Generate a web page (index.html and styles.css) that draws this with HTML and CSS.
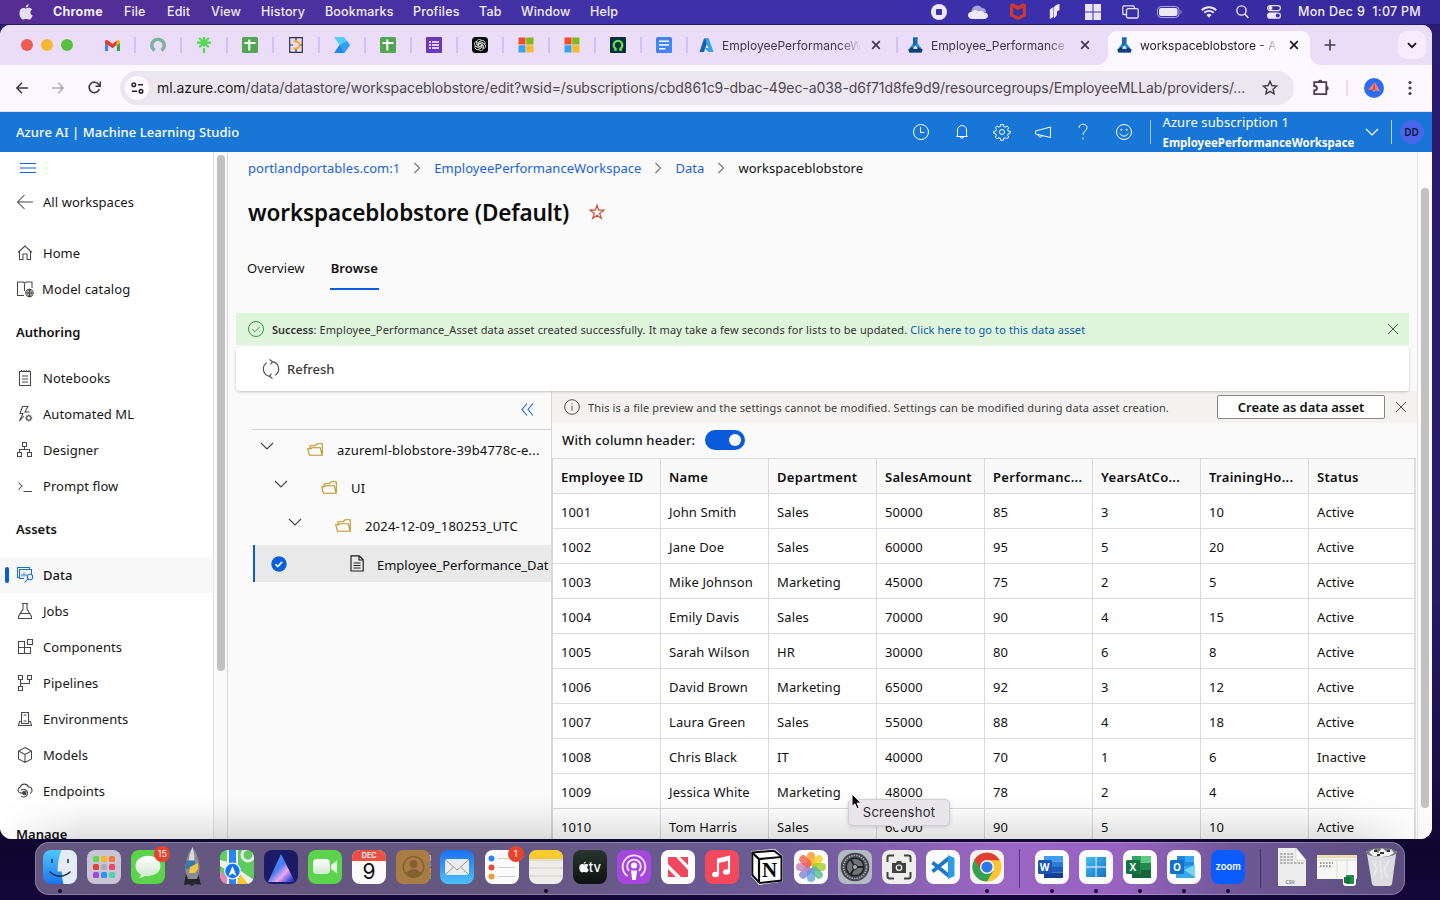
FILE: index.html
```html
<!DOCTYPE html>
<html lang="en">
<head>
<meta charset="utf-8">
<title>workspaceblobstore - Azure AI | Machine Learning Studio</title>
<link rel="stylesheet" href="styles.css">
</head>
<body>
<svg class="defs" width="0" height="0">
  <defs>
    <linearGradient id="gBlue" x1="0" y1="0" x2="0" y2="1"><stop offset="0" stop-color="#1b6ff0"/><stop offset="1" stop-color="#4cc3fb"/></linearGradient>
    <linearGradient id="gAz" x1="0" y1="0" x2="1" y2="1"><stop offset="0" stop-color="#41c0f0"/><stop offset="1" stop-color="#1670c8"/></linearGradient>
    <linearGradient id="gFind" x1="0" y1="0" x2="0" y2="1"><stop offset="0" stop-color="#4fc8fb"/><stop offset="1" stop-color="#1c74f0"/></linearGradient>
    <linearGradient id="gWhite" x1="0" y1="0" x2="0" y2="1"><stop offset="0" stop-color="#fff"/><stop offset="1" stop-color="#d2e8cf"/></linearGradient>
    <linearGradient id="gPrism" x1="0" y1="0" x2="1" y2="1"><stop offset="0" stop-color="#2aa0ff"/><stop offset=".45" stop-color="#4a7cf5"/><stop offset=".65" stop-color="#f0a8e8"/><stop offset=".85" stop-color="#4855e8"/><stop offset="1" stop-color="#221a80"/></linearGradient>
    <clipPath id="tile"><rect width="34" height="34" rx="8"/></clipPath>
  </defs>
  <symbol id="sheet" viewBox="0 0 16 16"><rect width="16" height="16" rx="1.5" fill="#50a651"/><path d="M7.3 2.5v11M2.5 6h11" stroke="#fff" stroke-width="2" fill="none"/></symbol>
  <symbol id="ms" viewBox="0 0 16 16"><path fill="#ef4f2c" d="M.5.5H7.500V7.500H.5z"/><path fill="#80b916" d="M8.200.5h7.300V7.500H8.200z"/><path fill="#39a5ef" d="M.5 8.200H7.500v7.300H.5z"/><path fill="#fbb82c" d="M8.200 8.200h7.300v7.300H8.200z"/></symbol>
  <symbol id="flask" viewBox="0 0 16 16"><path fill="#2a8fd0" d="M5.300 0h5v6.500L15.500 13l-1 3h-13L.4 13l4.900-6.500z"/><path fill="#123e78" d="M.4 13 4 10.500l5 2 2-2 4.500 2.500-1 3h-13z"/><path fill="#fff" d="M8 8.500 10.500 12H5.200z"/><path fill="#1b66a8" d="M5.300 0h5v1.500h-1V7L6.800 9 5.300 6.500z"/></symbol>
  <symbol id="x" viewBox="0 0 10 10"><path d="M1.200 1.200l7.600 7.600M8.800 1.200L1.200 8.800" stroke="currentColor" stroke-width="1.700" fill="none"/></symbol>
  <symbol id="thinx" viewBox="0 0 12 12"><path d="M1 1l10 10M11 1L1 11" stroke="#555" stroke-width="1" fill="none"/></symbol>
  <symbol id="sep" viewBox="0 0 8 12"><path d="M1.500 1l5 5-5 5" stroke="#7a7876" stroke-width="1.200" fill="none"/></symbol>
  <symbol id="chev" viewBox="0 0 14 8"><path d="M1 1l6 6 6-6" stroke="currentColor" stroke-width="1.100" fill="none"/></symbol>
  <symbol id="folder" viewBox="0 0 16 13"><path d="M2.500 12.300 .7 5.700h3l1.300-1H13.200l2 7.600H2.500M3 5.500V2.700h5.200L10 .8h5.300v11.400" fill="none" stroke="#bf9420" stroke-width="1.100"/></symbol>
  <symbol id="apple" viewBox="0 0 14 16"><path fill="currentColor" d="M9.700.2c.1 1.700-1.400 3.300-3 3.200C6.500 1.800 8.100.3 9.700.2zM7 4.400c.8 0 1.600-.7 2.900-.7 1.300 0 2.500.7 3.200 1.700-2.600 1.500-2.200 4.900.6 6-.6 1.700-2 4.200-3.500 4.200-1.200 0-1.500-.7-3-.7s-1.900.7-3 .7C2.300 15.600.4 12 .4 9c0-3.300 2-5.100 4-5.100 1.200 0 2 .5 2.600.5z"/></symbol>
</svg>

<header class="menubar">
  <svg class="apple" width="14" height="16"><use href="#apple"/></svg>
  <b class="m-app">Chrome</b>
  <span style="width:43px">File</span><span style="width:44px">Edit</span><span style="width:50px">View</span><span style="width:64px">History</span><span style="width:88px">Bookmarks</span><span style="width:66px">Profiles</span><span style="width:42px">Tab</span><span style="width:69px">Window</span><span>Help</span>
  <div class="m-right">
    <svg width="16" height="16"><circle cx="8" cy="8" r="8" fill="#eee9f8"/><rect x="5" y="5" width="6" height="6" rx="1" fill="#3b31a6"/></svg>
    <svg width="20" height="14" viewBox="0 0 20 14"><path d="M4.500 9A4.600 4.600 0 0 1 5 2.500 5.500 5.500 0 0 1 14 3c3 0 4 2 4 4z" fill="#a79fd8"/><path d="M0 10c0-2 2-3.500 4-3.300C6 4 9 5 10.500 6.500c3-2 5 0 5.500 1 2.500 0 4 1.500 4 3.200S18.500 14 16 14H4c-2 0-4-1.500-4-4z" fill="#eee9f8"/></svg>
    <svg width="16" height="17" viewBox="0 0 16 17"><path d="M0 1.500 3 0l5 3 5-3 3 1.500V13l-8 4-8-4zM3.200 4.500v6.700L8 13.600l4.800-2.400V4.500L8 7.300z" fill="#c93a32" fill-rule="evenodd"/></svg>
    <svg width="11" height="16" viewBox="0 0 11 16"><path d="M.8 5.500 4.500 3v10L.8 15zM5 3.500Q5.500 1 10.500 0v6L8 7.500V11l-2.500 3H5z" fill="#eee9f8"/></svg>
    <svg width="16" height="16" viewBox="0 0 16 16"><path d="M0 0h7.500v7.500H0zM8.500 0H16v7.500H8.500zM0 8.500h7.500V16H0zM8.500 8.500H16V16H8.500z" fill="#e9e5f6"/></svg>
    <svg width="17" height="14" viewBox="0 0 17 14"><path d="M4 9.500H2A1.300 1.300 0 0 1 .8 8.200V2A1.300 1.300 0 0 1 2 .8h9A1.300 1.300 0 0 1 12.300 2v1.500" stroke="#e9e5f6" stroke-width="1.300" fill="none"/><rect x="4.500" y="3.700" width="11.700" height="9.300" rx="1.600" stroke="#e9e5f6" stroke-width="1.300" fill="none"/></svg>
    <svg width="25" height="12" viewBox="0 0 25 12"><rect x=".5" y=".5" width="21.500" height="11" rx="3.500" stroke="#a9a2dc" fill="none"/><rect x="2" y="2" width="18.500" height="8" rx="2" fill="#eee9f8"/><path d="M23.500 4c1.500.7 1.500 3.300 0 4z" fill="#a9a2dc"/></svg>
    <svg width="16" height="12" viewBox="0 0 16 12"><path d="M.8 4.200a10.300 10.300 0 0 1 14.400 0M3.300 6.800a6.800 6.800 0 0 1 9.400 0" stroke="#eee9f8" stroke-width="1.900" fill="none"/><path d="M5.500 9a3.600 3.600 0 0 1 5 0L8 11.700z" fill="#eee9f8"/></svg>
    <svg width="13" height="14" viewBox="0 0 13 14"><circle cx="5.500" cy="5.500" r="4.600" stroke="#eee9f8" stroke-width="1.400" fill="none"/><path d="M8.900 9l3.500 4" stroke="#eee9f8" stroke-width="1.600"/></svg>
    <svg width="14" height="14" viewBox="0 0 14 14"><rect x=".6" y=".6" width="12.800" height="5" rx="2.500" stroke="#eee9f8" stroke-width="1.200" fill="none"/><circle cx="3.500" cy="3.100" r="2" fill="#eee9f8"/><rect y="7.500" width="14" height="6.300" rx="3.100" fill="#eee9f8"/><circle cx="10.800" cy="10.600" r="2" fill="#3b31a6"/></svg>
    <span class="clock">Mon Dec 9&nbsp; 1:07 PM</span>
  </div>
</header>

<main class="window">
  <div class="tabstrip">
    <div class="lights"><i class="red"></i><i class="yel"></i><i class="grn"></i></div>
    <div class="pin"><svg width="15" height="11" viewBox="0 0 15 11"><path d="M0 1.500V11h3.200V5z" fill="#4285f4"/><path d="M15 1.500V11h-3.200V5z" fill="#34a853"/><path d="M0 1.500C.5-.2 2-.3 3.200.5L7.500 4 11.800.500v4.300L7.500 8.300 0 3z" fill="#e43d30"/><path d="M11.800.5C13-.3 15 0 15 2v1l-3.200 2.400z" fill="#fbbc04"/></svg></div>
    <div class="pin"><svg width="16" height="16" viewBox="0 0 16 16"><path d="M4.500 13.500A6.200 6.200 0 1 1 11.500 13.500" stroke="#7bb39d" stroke-width="3.600" fill="none"/></svg></div>
    <div class="pin"><svg width="14" height="16" viewBox="0 0 14 16"><path d="M7 0v9.500M0 5.600h14M2.200 1l9.600 9.200M11.800 1 2.200 10.200M7 11v5" stroke="#50dc50" stroke-width="2.200" fill="none"/></svg></div>
    <div class="pin"><svg width="16" height="16"><use href="#sheet"/></svg></div>
    <div class="pin"><svg width="14" height="16" viewBox="0 0 14 16"><path d="M.7.7h12.600v14.600H.7zM7 .7v3M7 12v3.300M.7 8H4m6 0h3.300" stroke="#2d3146" stroke-width="1.200" fill="none"/><path d="M4.500 4.500H7a3.500 3.500 0 0 1 0 7H4.500" stroke="#f3ac25" stroke-width="2" fill="none"/></svg></div>
    <div class="pin"><svg width="16" height="16" viewBox="0 0 16 16"><path d="M0 0h10l6 8H5.500z" fill="#4fd0f5"/><path d="M5.500 8H16l-6 8H0z" fill="#1e86f5"/><path d="M5.500 8 13 4l3 4-6 8z" fill="#2fa0f8"/></svg></div>
    <div class="pin"><svg width="16" height="16"><use href="#sheet"/></svg></div>
    <div class="pin"><svg width="16" height="16" viewBox="0 0 16 16"><rect width="16" height="16" rx="1" fill="#6a38b8"/><path d="M3 5h2M3 8h2M3 11h2M6 5h7M6 8h7M6 11h7" stroke="#fff" stroke-width="1.700"/></svg></div>
    <div class="pin"><svg width="16" height="16" viewBox="0 0 16 16"><rect width="16" height="16" rx="3.500" fill="#050505"/><g fill="none" stroke="#ddd" stroke-width=".8"><path id="lobe" d="M8 9.800 4.900 8V4.700A2.600 2.600 0 0 1 9.600 3.300L7 4.900v3"/><use href="#lobe" transform="rotate(60 8 8)"/><use href="#lobe" transform="rotate(120 8 8)"/><use href="#lobe" transform="rotate(180 8 8)"/><use href="#lobe" transform="rotate(240 8 8)"/><use href="#lobe" transform="rotate(300 8 8)"/></g></svg></div>
    <div class="pin"><svg width="16" height="16"><use href="#ms"/></svg></div>
    <div class="pin"><svg width="16" height="16"><use href="#ms"/></svg></div>
    <div class="pin"><svg width="16" height="16" viewBox="0 0 16 16"><rect width="16" height="16" rx="1" fill="#0b2e3c"/><path d="M6 11.900A4.300 4.300 0 1 1 10 11.900M4 12.500h2.800M9.200 12.500H12" stroke="#5fe04e" stroke-width="2.300" fill="none"/></svg></div>
    <div class="pin"><svg width="16" height="16" viewBox="0 0 16 16"><rect width="16" height="16" rx="1.500" fill="#4285f4"/><path d="M3 4.300h10M3 8h10M3 11.700h6.500" stroke="#fff" stroke-width="1.600"/></svg></div>
    <div class="tab t1"><svg width="15" height="15" viewBox="0 0 15 15"><path d="M5 .5h4.500L5 14H.5z" fill="#1561b0"/><path d="M6.500.5h3.200L14.500 14h-4.800L5.500 10h4L7.200 5z" fill="#33a4ea"/></svg><span>EmployeePerformanceW</span><svg class="cx" width="10" height="10"><use href="#x"/></svg></div>
    <div class="tab t2"><svg width="15" height="16"><use href="#flask"/></svg><span>Employee_Performance -</span><svg class="cx" width="10" height="10"><use href="#x"/></svg></div>
    <div class="tab active"><svg width="15" height="16"><use href="#flask"/></svg><span>workspaceblobstore - Az</span><svg class="cx" width="10" height="10"><use href="#x"/></svg></div>
    <svg class="plus" width="12" height="12"><path d="M6 .5v11M.5 6h11" stroke="#453c54" stroke-width="1.600"/></svg>
    <div class="tabmenu"><svg width="10" height="7"><path d="M1 1.200l4 4 4-4" stroke="#1c1a20" stroke-width="1.900" fill="none"/></svg></div>
  </div>

  <div class="toolbar">
    <svg width="12" height="12" viewBox="0 0 12 12"><path d="M12 6H1M6 .8.9 6 6 11.200" stroke="#3d374a" stroke-width="1.500" fill="none"/></svg>
    <svg width="12" height="12" viewBox="0 0 12 12"><path d="M0 6h11M6 .8 11.100 6 6 11.200" stroke="#b0a9b6" stroke-width="1.500" fill="none"/></svg>
    <svg width="13" height="13" viewBox="0 0 13 13"><path d="M11.300 8A5.200 5.200 0 1 1 10.700 3.500L12 5" stroke="#3d374a" stroke-width="1.600" fill="none"/><path d="M12.300.5v4.800H7.500" stroke="#3d374a" stroke-width="1.600" fill="none"/></svg>
    <div class="omni">
      <div class="tune"><svg width="13" height="12" viewBox="0 0 13 12"><g stroke="#25222b" stroke-width="1.500" fill="none"><circle cx="2.800" cy="2.800" r="1.800"/><path d="M7 2.800h5M1 9.200h5"/><circle cx="10" cy="9.200" r="1.800"/></g></svg></div>
      <p class="url"><em>ml.azure.com</em>/data/datastore/workspaceblobstore/edit?wsid=/subscriptions/cbd861c9-dbac-49ec-a038-d6f71d8fe9d9/resourcegroups/EmployeeMLLab/providers/...</p>
      <svg width="16" height="15" viewBox="0 0 16 15"><path d="M8 1.300l1.900 4.300 4.700.5-3.500 3.100 1 4.600L8 11.400l-4.100 2.400 1-4.600L1.400 6.100l4.700-.5z" stroke="#443f4c" stroke-width="1.500" fill="none"/></svg>
    </div>
    <svg class="ext" width="17" height="17" viewBox="0 0 17 17"><path d="M1.200 3.200H13.300V15.200H1.200V11.500C4.800 11.500 4.800 7 1.200 7z" fill="none" stroke="#453c54" stroke-width="1.800"/><path d="M5 3a2.200 2.200 0 0 1 4.400 0zM13.500 7a2.200 2.200 0 0 1 0 4.400z" fill="#453c54"/></svg>
    <i class="tsep"></i>
    <svg class="prof" width="20" height="20"><circle cx="10" cy="10" r="10" fill="#2c6cf0"/><path d="M11 4l5 9.500-4.500-1L9.500 14l-1-2-4.500-.5z" fill="#f2806e"/><path d="M11 4v8L8 12z" fill="#c74e58"/></svg>
    <svg width="4" height="16"><g fill="#453c54"><circle cx="2" cy="2.500" r="1.600"/><circle cx="2" cy="8" r="1.600"/><circle cx="2" cy="13.500" r="1.600"/></g></svg>
  </div>

  <div class="azbar">
    <span class="brand">Azure AI | Machine Learning Studio</span>
    <div class="azicons">
      <svg width="18" height="18"><circle cx="9" cy="9" r="7.500"/><path d="M8.500 4v5.500h4"/></svg>
      <svg width="18" height="18"><path d="M3.500 13.500h11M4.500 13.500V7a4.500 4.500 0 0 1 9 0v6.500M7.300 13.500a1.700 1.700 0 0 0 3.400 0"/></svg>
      <svg width="18" height="18"><circle cx="9" cy="9" r="2.500"/><path d="M7.700 1.500h2.600l.4 2 1.500.6 1.700-1.100 1.800 1.800-1.100 1.700.6 1.500 2 .4v1.800l-2 .6-.6 1.500 1.100 1.700-1.800 1.800-1.700-1.100-1.500.6-.4 2H7.700l-.4-2-1.500-.6-1.700 1.100L2.300 14l1.100-1.700-.6-1.500-2-.6V8.400l2-.4.600-1.500-1.100-1.700L4.100 3l1.700 1.100 1.500-.6z"/></svg>
      <svg width="18" height="18"><path d="M1.500 8 16.500 4v10.500L1.500 11zM4 11.500c0 3 4 3.300 4.500 1"/></svg>
      <svg width="18" height="18"><path d="M5 5c0-5 8-5 8-.3 0 3-4 3.300-4 7.300M9 14.500V16.500"/></svg>
      <svg width="18" height="18"><circle cx="9" cy="9" r="7.500"/><path d="M5 10.500c1.500 3.500 6.500 3.500 8 0"/><circle cx="6.300" cy="6.800" r=".6"/><circle cx="11.700" cy="6.800" r=".6"/></svg>
    </div>
    <div class="sub"><span>Azure subscription 1</span><b>EmployeePerformanceWorkspace</b></div>
    <svg class="azchev" width="14" height="8"><use href="#chev"/></svg>
    <div class="avwrap"><div class="avatar">DD</div></div>
  </div>

  <div class="body">
    <nav class="side">
      <div class="burger"><svg width="16" height="10"><path d="M0 .5h16M0 5h16M0 9.500h16" stroke="#0a60e0"/></svg></div>
      <div class="item"><svg viewBox="0 0 18 18"><path d="M17 9H1.500M8.500 2 1.500 9l7 7"/></svg>All workspaces</div>
      <div class="gap15"></div>
      <div class="item"><svg viewBox="0 0 18 18"><path d="M2 8.500 9 2l7 6.500M3.500 7.500V15.500H7V10h4v5.500h3.500v-8"/></svg>Home</div>
      <div class="item cat"><svg viewBox="0 0 18 18"><path d="M8 15.500H1.500V2H7l1.500 1L10 2h6v6M8.500 3v8"/><circle cx="13.500" cy="13" r="3.700"/><path d="M9.500 13h8M13.500 9v8"/><ellipse cx="13.500" cy="13" rx="1.700" ry="3.700"/></svg>Model catalog</div>
      <h4>Authoring</h4>
      <div class="item"><svg viewBox="0 0 18 18"><path d="M3.500 2.500h11v14h-11zM5.500 1v2M8 1v2M10.500 1v2M13 1v2M6 7h6M6 10h6M6 13h6"/></svg>Notebooks</div>
      <div class="item"><svg viewBox="0 0 18 18"><path d="M6.500 1.500h5.500L9 7h4.500M6.500 1.500 4 8.500h3L3.500 16 8 11"/><circle cx="12.800" cy="13" r="2.200"/><path d="M12.800 9.500v1.300M12.800 15.200v1.300M9.300 13h1.300M15 13h1.300M10.400 10.600l.9.900M14.300 14.500l.9.900M15.200 10.600l-.9.900M11.300 14.500l-.9.900"/></svg>Automated ML</div>
      <div class="item"><svg viewBox="0 0 18 18"><path d="M6.500 1.500h4v4h-4zM1.500 11.500h4v4h-4zM11.500 11.500h4v4h-4zM8.500 5.500v3M3.500 11.500v-3h10v3"/></svg>Designer</div>
      <div class="item"><svg viewBox="0 0 18 18"><path d="M2.500 5.500 6 9l-3.500 3.500M7.500 14.500h8.500"/></svg>Prompt flow</div>
      <h4>Assets</h4>
      <div class="item on"><svg viewBox="0 0 18 18"><path d="M3.500 11.500h-2V1.500h12v2M8 12.500H3.500v-9h12V8M6 10.500V8M8 10.500V6.500M10 10V8"/><circle cx="14" cy="11" r="2.700"/><path d="M12 13l-3.500 3.500"/></svg>Data</div>
      <div class="item"><svg viewBox="0 0 18 18"><path d="M6 1.500h6M7 1.500V7L2.500 14.500v2h13v-2L11 7V1.500M4.500 11.500h9"/></svg>Jobs</div>
      <div class="item"><svg viewBox="0 0 18 18"><path d="M2.500 3.500h6v12h-6zM2.500 9.500h12v6h-12M11.500 1.500h5v5h-5z"/></svg>Components</div>
      <div class="item"><svg viewBox="0 0 18 18"><path d="M2.500 1.500h4v4h-4zM11.500 1.500h4v4h-4zM2.500 12.500h4v4h-4zM4.500 5.500v7M4.500 9.500h9v-4"/></svg>Pipelines</div>
      <div class="item"><svg viewBox="0 0 18 18"><path d="M5.500 13.500v-11h7v11zM7.500 5h3M7.500 11h3M5 11.500H3.500l-1 4h13l-1-4H13"/></svg>Environments</div>
      <div class="item"><svg viewBox="0 0 18 18"><path d="M9 1.500 15.500 5v8L9 16.500 2.500 13V5zM2.500 5 9 8.500 15.500 5M9 8.500v8"/></svg>Models</div>
      <div class="item"><svg viewBox="0 0 18 18"><path d="M5.500 11H4.200A3 3 0 0 1 4 5.300 4.500 4.500 0 0 1 12.500 5c3.500-.5 5 5 1.500 6.500"/><circle cx="8.300" cy="11" r="1.700" fill="#444"/><path d="M4.500 11h4M5 8.500c2-2.500 6.500-1 6.500 2.500 0 4-4.500 5-6.500 3"/></svg>Endpoints</div>
      <h4>Manage</h4>
    </nav>
    <div class="sidescroll"><i></i></div>

    <section class="content">
      <div class="crumbs"><a>portlandportables.com:1</a><svg width="8" height="12"><use href="#sep"/></svg><a>EmployeePerformanceWorkspace</a><svg width="8" height="12"><use href="#sep"/></svg><a>Data</a><svg width="8" height="12"><use href="#sep"/></svg><span>workspaceblobstore</span></div>
      <div class="titlerow"><h1>workspaceblobstore (Default)</h1><svg width="16" height="16" viewBox="0 0 16 16"><path d="M8 1.200l1.700 5h5.200l-4.200 3.200 1.600 5L8 11.300l-4.300 3.100 1.600-5L1.100 6.200h5.200z" stroke="#d14b35" stroke-width="1.200" fill="none"/></svg></div>
      <div class="pivots"><span>Overview</span><b>Browse</b></div>
      <div class="success">
        <svg width="18" height="18"><circle cx="9" cy="9" r="7.500" stroke="#2f9a2f" fill="none"/><path d="M5.200 9.200l2.600 2.600 5-5" stroke="#2f9a2f" fill="none"/></svg>
        <p><b>Success</b>: Employee_Performance_Asset data asset created successfully. It may take a few seconds for lists to be updated. <a>Click here to go to this data asset</a></p>
        <svg class="sx" width="12" height="12"><use href="#thinx"/></svg>
      </div>
      <div class="cmdbar"><svg width="18" height="20" viewBox="0 0 18 20"><path d="M7.500 17.300A7.300 7.300 0 0 1 5 3.800M10.500 2.700A7.300 7.300 0 0 1 13 16.200M7.500.5l3 2.200-2 2.800M10.500 19.500l-3-2.200 2-2.800" fill="none" stroke="#555" stroke-width="1.200"/></svg><span>Refresh</span></div>
      <div class="split">
        <div class="tree">
          <div class="collapse"><svg width="13" height="13"><path d="M6 .5l-5 6 5 6M12 .5l-5 6 5 6" stroke="#1a62dd" stroke-width="1.100" fill="none"/></svg></div>
          <div class="node l0"><svg class="nc" width="14" height="8"><use href="#chev"/></svg><svg width="16" height="13"><use href="#folder"/></svg><span>azureml-blobstore-39b4778c-e...</span></div>
          <div class="node l1"><svg class="nc" width="14" height="8"><use href="#chev"/></svg><svg width="16" height="13"><use href="#folder"/></svg><span>UI</span></div>
          <div class="node l2"><svg class="nc" width="14" height="8"><use href="#chev"/></svg><svg width="16" height="13"><use href="#folder"/></svg><span>2024-12-09_180253_UTC</span></div>
          <div class="node sel"><svg width="18" height="18"><circle cx="9" cy="9" r="8.500" fill="#fff"/><circle cx="9" cy="9" r="7.800" fill="#0a5fdc"/><path d="M5.500 9.200l2.300 2.300 4.300-4.600" stroke="#fff" stroke-width="1.600" fill="none"/></svg><svg class="file" width="14" height="17"><path d="M1 .8h8.300l3.900 4v11.200H1zM9 .8V5h4M3.500 8h7M3.500 10.500h7M3.500 13h7" fill="none" stroke="#1d1c1b" stroke-width="1.150"/></svg><span>Employee_Performance_Dat</span></div>
        </div>
        <div class="preview">
          <div class="notice"><svg width="16" height="16"><circle cx="8" cy="8" r="7.300" fill="none" stroke="#55534f"/><path d="M8 6.800v5M8 4v1.300" stroke="#55534f"/></svg><span>This is a file preview and the settings cannot be modified. Settings can be modified during data asset creation.</span><button>Create as data asset</button><svg width="12" height="12"><use href="#thinx"/></svg></div>
          <div class="hdrrow"><b>With column header:</b><i class="toggle"></i></div>
          <table>
            <tr><th>Employee ID</th><th>Name</th><th>Department</th><th>SalesAmount</th><th>Performanc...</th><th>YearsAtCo...</th><th>TrainingHo...</th><th>Status</th></tr>
            <tr><td>1001</td><td>John Smith</td><td>Sales</td><td>50000</td><td>85</td><td>3</td><td>10</td><td>Active</td></tr>
            <tr><td>1002</td><td>Jane Doe</td><td>Sales</td><td>60000</td><td>95</td><td>5</td><td>20</td><td>Active</td></tr>
            <tr><td>1003</td><td>Mike Johnson</td><td>Marketing</td><td>45000</td><td>75</td><td>2</td><td>5</td><td>Active</td></tr>
            <tr><td>1004</td><td>Emily Davis</td><td>Sales</td><td>70000</td><td>90</td><td>4</td><td>15</td><td>Active</td></tr>
            <tr><td>1005</td><td>Sarah Wilson</td><td>HR</td><td>30000</td><td>80</td><td>6</td><td>8</td><td>Active</td></tr>
            <tr><td>1006</td><td>David Brown</td><td>Marketing</td><td>65000</td><td>92</td><td>3</td><td>12</td><td>Active</td></tr>
            <tr><td>1007</td><td>Laura Green</td><td>Sales</td><td>55000</td><td>88</td><td>4</td><td>18</td><td>Active</td></tr>
            <tr><td>1008</td><td>Chris Black</td><td>IT</td><td>40000</td><td>70</td><td>1</td><td>6</td><td>Inactive</td></tr>
            <tr><td>1009</td><td>Jessica White</td><td>Marketing</td><td>48000</td><td>78</td><td>2</td><td>4</td><td>Active</td></tr>
            <tr><td>1010</td><td>Tom Harris</td><td>Sales</td><td>60000</td><td>90</td><td>5</td><td>10</td><td>Active</td></tr>
          </table>
        </div>
      </div>
    </section>
    <div class="mainscroll"><i></i></div>
  </div>
  <div class="shade"></div>
</main>

<footer class="dock">
  <div class="app run"><svg viewBox="0 0 34 34"><rect width="34" height="34" rx="8" fill="url(#gFind)"/><path d="M18.500 0H26a8 8 0 0 1 8 8v18a8 8 0 0 1-8 8h-5.500q-1.700-6-1.700-12.500H14.500Q14.700 9 18.500 0z" fill="#e4ebf4"/><path d="M9 9.500v3M25 9.500v3M7 22q10 8.500 20 0" stroke="#1d2b45" stroke-width="1.500" fill="none" stroke-linecap="round"/></svg></div>
  <div class="app"><svg viewBox="0 0 34 34"><rect width="34" height="34" rx="8" fill="#cac5d6"/><g><rect x="6" y="6" width="6" height="6" rx="1.500" fill="#62d84a"/><rect x="14" y="6" width="6" height="6" rx="1.500" fill="#f7b52f"/><rect x="22" y="6" width="6" height="6" rx="1.500" fill="#f47c30"/><rect x="6" y="14" width="6" height="6" rx="1.500" fill="#e2442f"/><rect x="14" y="14" width="6" height="6" rx="1.500" fill="#a9adb8"/><rect x="22" y="14" width="6" height="6" rx="1.500" fill="#f04766"/><rect x="6" y="22" width="6" height="6" rx="1.500" fill="#a34bd8"/><rect x="14" y="22" width="6" height="6" rx="1.500" fill="#2b95f5"/><rect x="22" y="22" width="6" height="6" rx="1.500" fill="#4fd3a8"/></g></svg></div>
  <div class="app"><svg viewBox="0 0 34 34"><rect width="34" height="34" rx="8" fill="#5bd44b"/><ellipse cx="17" cy="16" rx="12.500" ry="10.200" fill="url(#gWhite)"/><path d="M10 23q0 4-2.500 5 5 0 7-3z" fill="#dcefd9"/></svg><u class="badge">15</u></div>
  <div class="app rocket"><svg viewBox="0 0 34 40"><path d="M11 27 9 38l4-2 1-6zM23 27l3 11-4-2-2-6z" fill="#222328"/><path d="M17.500 0Q9 12 10.500 25l2.500 7h9l2.300-7Q26 12 17.500 0z" fill="#898b90"/><path d="M17.500 0Q14 8 13.500 15h6Q20 8 17.500 0z" fill="#d8dadc"/><path d="M11 13.500h9v5l-7 3.500H10.500z" fill="#3a78aa"/><path d="M15 20l8-4v6l-3 4h-6z" fill="#f3c540"/><path d="M12 32h10l2 6-4-1-3 2-3-2-4 1z" fill="#27272b"/></svg></div>
  <div class="app"><svg viewBox="0 0 34 34"><g clip-path="url(#tile)"><rect width="34" height="34" fill="#5dcc5e"/><path d="M0 20 12 34H0z" fill="#ea7fc1"/><path d="M0 0h9v14H0z" fill="#63cf62"/><path d="M0 10 8 12 34 30v4H28L0 16z" fill="#f2f0ea"/><path d="M7 0h2v34H7zM16 0h2v34h-2z" fill="#f2f0ea"/><path d="M9 0h7v34H9z" fill="#2786f4"/><path d="M20 24l8 10H17z" fill="#f5c52e"/><circle cx="28" cy="5" r="6" fill="none" stroke="#e4e9ec" stroke-width="3"/><circle cx="12.500" cy="21" r="7.800" fill="#1473ee" stroke="#e6f0fb" stroke-width="1.200"/><path d="M12.500 16l4 10-4-2.500L8.500 26z" fill="#fff"/></g></svg></div>
  <div class="app"><svg viewBox="0 0 34 34"><rect width="34" height="34" rx="8" fill="#1c1c66"/><path d="M17 4 31 32H4z" fill="url(#gPrism)"/></svg></div>
  <div class="app"><svg viewBox="0 0 34 34"><rect width="34" height="34" rx="8" fill="#5bd44b"/><rect x="5" y="9" width="17" height="15" rx="4" fill="url(#gWhite)"/><path d="M23 15l6-4.500v13L23 19z" fill="#e6f5e4"/></svg></div>
  <div class="app cal"><span>DEC</span><strong>9</strong></div>
  <div class="app"><svg viewBox="0 0 34 34"><path d="M30 5h5v6h-5z" fill="#aeb5bc"/><path d="M30 12h5v5h-5z" fill="#3aa0e8"/><path d="M30 18h5v5h-5z" fill="#ef8c33"/><path d="M30 24h5v5h-5z" fill="#56bb55"/><rect width="34" height="34" rx="7" fill="#a97b45"/><g fill="none" stroke="#82602f" stroke-width="1.300"><circle cx="17.500" cy="17" r="10.300"/></g><circle cx="17.500" cy="14" r="4" fill="#82602f"/><path d="M10 23q7.500-8 15 0-7 8-15 0z" fill="#82602f"/></svg></div>
  <div class="app"><svg viewBox="0 0 34 34"><rect width="34" height="34" rx="8" fill="url(#gBlue)"/><rect x="5" y="9" width="24" height="16" rx="2.500" fill="#ececec"/><path d="M5.500 10 17 20 28.500 10M5.500 24.500l8-7.500M28.500 24.500l-8-7.500" stroke="#9a9a9a" stroke-width="1" fill="none"/></svg></div>
  <div class="app"><svg viewBox="0 0 34 34"><rect width="34" height="34" rx="8" fill="#fbfbfb"/><circle cx="6.500" cy="8.500" r="3" fill="#2b86f5"/><circle cx="6.500" cy="17.500" r="3" fill="#ea4b3e"/><circle cx="6.500" cy="26.500" r="3" fill="#f29a33"/><path d="M12.500 8.500H30M12.500 17.500H30M12.500 26.500H30" stroke="#cfcfcf"/></svg><u class="badge">1</u></div>
  <div class="app run"><svg viewBox="0 0 34 34"><rect width="34" height="34" rx="8" fill="#efede9"/><path d="M0 9V8a8 8 0 0 1 8-8h18a8 8 0 0 1 8 8v1z" fill="#f9cb2c"/><path d="M0 10h34M0 18h34M0 26h34" stroke="#cfcbc4"/></svg></div>
  <div class="app tv"><svg width="10" height="12" viewBox="0 0 14 16"><use href="#apple"/></svg>tv</div>
  <div class="app"><svg viewBox="0 0 34 34"><rect width="34" height="34" rx="8" fill="#a547dc"/><g fill="none" stroke="#f5e8fc" stroke-width="1.800"><path d="M10.500 26A11.300 11.300 0 1 1 23.500 26"/><path d="M12 21A6.800 6.800 0 1 1 22 21"/></g><circle cx="17" cy="15.500" r="3" fill="#fff"/><path d="M14 20.500h6L18.800 30h-3.600z" fill="#fff"/></svg></div>
  <div class="app"><svg viewBox="0 0 34 34"><rect width="34" height="34" rx="8" fill="#fcfcfc"/><path d="M7 7h8l12 13v7h-7L7 14z" fill="#ef4760"/><path d="M19 7h8v8zM7 19l8 8H7z" fill="#ef4760"/></svg></div>
  <div class="app"><svg viewBox="0 0 34 34"><rect width="34" height="34" rx="8" fill="#f4485c"/><path d="M13 24V9.500l11-2.500v14" fill="none" stroke="#fff" stroke-width="2.200"/><path d="M13 11.500 24 9" stroke="#fff" stroke-width="3"/><ellipse cx="10.500" cy="24.500" rx="3.500" ry="2.800" fill="#fff"/><ellipse cx="21.500" cy="22" rx="3.500" ry="2.800" fill="#fff"/></svg></div>
  <div class="app notion"><svg viewBox="0 0 34 34"><path d="M1 1 25-1l8 7v25.500L9 35l-8-9z" fill="#fff"/><path d="M2.300 2.500 24 .8 31.500 6.500v24L9.500 33 2.300 25z" fill="#fff" stroke="#0b0b0b" stroke-width="2"/><path d="M2.500 3 9 9l22.500-2M9 9v24" stroke="#0b0b0b" stroke-width="2.200" fill="none"/></svg><span>N</span></div>
  <div class="app"><svg viewBox="0 0 34 34"><rect width="34" height="34" rx="8" fill="#fcfcfc"/><g fill-opacity=".82"><rect x="13" y="2" width="8" height="14" rx="4" fill="#f79a26"/><rect x="13" y="2" width="8" height="14" rx="4" fill="#f2cf20" transform="rotate(45 17 17)"/><rect x="13" y="2" width="8" height="14" rx="4" fill="#a5cb3a" transform="rotate(90 17 17)"/><rect x="13" y="2" width="8" height="14" rx="4" fill="#58b98a" transform="rotate(135 17 17)"/><rect x="13" y="2" width="8" height="14" rx="4" fill="#60a8e4" transform="rotate(180 17 17)"/><rect x="13" y="2" width="8" height="14" rx="4" fill="#8485d0" transform="rotate(225 17 17)"/><rect x="13" y="2" width="8" height="14" rx="4" fill="#c383c2" transform="rotate(270 17 17)"/><rect x="13" y="2" width="8" height="14" rx="4" fill="#ee5f50" transform="rotate(315 17 17)"/></g></svg></div>
  <div class="app"><svg viewBox="0 0 34 34"><rect width="34" height="34" rx="8" fill="#b3bbc3"/><circle cx="17" cy="17" r="14.300" fill="#45484e"/><circle cx="17" cy="17" r="11.500" fill="none" stroke="#a9adb2" stroke-width="1.600" stroke-dasharray="1.500 1"/><circle cx="17" cy="17" r="8.800" fill="#70747a" stroke="#222" stroke-width="1.500"/><path d="M17 17h9M17 17l-4.500-8M17 17l-4.500 8" stroke="#222" stroke-width="1.800"/><circle cx="17" cy="17" r="2.500" fill="#a9adb2" stroke="#222"/></svg></div>
  <div class="app"><svg viewBox="0 0 34 34"><rect width="34" height="34" rx="8" fill="#eeeeec"/><path d="M5.500 12V7.500q0-2 2-2H12M22 5.500h4.500q2 0 2 2V12M28.500 22v4.500q0 2-2 2H22M12 28.500H7.500q-2 0-2-2V22" fill="none" stroke="#3f4143" stroke-width="2"/><path d="M10 13h4l1-2h4l1 2h4v10H10z" fill="#3f4143"/><circle cx="17" cy="17.700" r="2.700" fill="#3f4143" stroke="#fff" stroke-width="1.200"/></svg></div>
  <div class="app"><svg viewBox="0 0 34 34"><rect width="34" height="34" rx="8" fill="#fcfcfc"/><path d="M6.500 12.500 23 26M6.500 21.500 23 8" stroke="#1b78c6" stroke-width="3.600"/><path d="M22 5l6.500 3v18L22 29z" fill="#2c9cea"/></svg></div>
  <div class="app run"><svg viewBox="0 0 34 34"><rect width="34" height="34" rx="8" fill="#f5f4f5"/><circle cx="17" cy="17" r="14.500" fill="#fbc531"/><path d="M17 17 4.400 9.700A14.500 14.500 0 0 0 17 31.500l6-10z" fill="#36a251"/><path d="M10 18 4.400 9.700A14.500 14.500 0 0 1 29.600 10.300H17z" fill="#e23d32"/><circle cx="17" cy="17" r="7" fill="#fff"/><circle cx="17" cy="17" r="5.600" fill="#2f78ec"/></svg></div>
  <i class="dsep"></i>
  <div class="app run letter"><svg viewBox="0 0 34 34"><rect width="34" height="34" rx="8" fill="#fcfcfc"/><path d="M9 6h19v5.500H9z" fill="#3f9df0"/><path d="M9 11.500h19V17H9z" fill="#2b7cd8"/><path d="M9 17h19v5.500H9z" fill="#1c5cbe"/><path d="M9 22.500h19V28H9z" fill="#153f92"/><rect x="3" y="10" width="14" height="14" rx="1.500" fill="#1b55b4"/></svg><span>W</span></div>
  <div class="app run"><svg viewBox="0 0 34 34"><rect width="34" height="34" rx="8" fill="#fcfcfc"/><path d="M7 7h9.600v9.600H7zM17.500 7h9.600v9.600h-9.600zM7 17.500h9.600v9.600H7zM17.500 17.500h9.600v9.600h-9.600z" fill="url(#gAz)"/></svg></div>
  <div class="app run letter"><svg viewBox="0 0 34 34"><rect width="34" height="34" rx="8" fill="#fcfcfc"/><path d="M9 6h19v22H9z" fill="#1f8c4c"/><path d="M18 6h10v7H18z" fill="#5fca84"/><path d="M9 6h9v7H9z" fill="#35a464"/><path d="M18 20h10v8H9v-4h9z" fill="#17643a"/><rect x="3" y="10" width="14" height="14" rx="1.500" fill="#147341"/></svg><span>X</span></div>
  <div class="app run letter"><svg viewBox="0 0 34 34"><rect width="34" height="34" rx="8" fill="#fcfcfc"/><path d="M10 6h17v12H10z" fill="#2587dc"/><path d="M18 6h9v6h-9z" fill="#36a8f0"/><path d="M9 17l19-2v12q0 1-1 1H9z" fill="#36a9e6"/><path d="M28 15v12L17 20z" fill="#79d5f4"/><rect x="3" y="10" width="14" height="14" rx="1.500" fill="#1272c8"/></svg><span>O</span></div>
  <div class="app run zoom">zoom</div>
  <i class="dsep"></i>
  <div class="app doc"><svg viewBox="0 0 34 40"><path d="M2 1h18l10 12v26H2z" fill="#ededed"/><path d="M20 1v12h10z" fill="#fff" stroke="#c5c5c5" stroke-width=".6"/><path d="M4 7h14M4 10h14M4 13h14M4 16h24" stroke="#a3a3a3" stroke-width="1.500" stroke-dasharray="2.500 1"/></svg><span>CSV</span></div>
  <div class="app shot"><svg viewBox="0 0 40 32"><rect width="40" height="24" fill="#f7f7f5"/><path d="M0 0h40v3H0z" fill="#ebdfae"/><path d="M0 5h40M0 12h16M20 5v19M30 5v19" stroke="#dadada"/><path d="M3 8h13M3 11h12" stroke="#999" stroke-width="2" stroke-dasharray="1.500 1.500"/><rect x="26" y="18" width="13" height="13" rx="3" fill="#fff"/><path d="M29 20h8v9h-8z" fill="#1f8c4c"/><path d="M27 22h6v6h-6z" fill="#147341"/></svg></div>
  <div class="app trash"><svg viewBox="0 0 34 40"><path d="M1.500 4h30L27 37q-.5 2-3 2H10q-2.500 0-3-2z" fill="#dcdcde"/><ellipse cx="16.500" cy="5.500" rx="15" ry="4.500" fill="#77797c"/><path d="M4 5l5-3 4 4 4-5 5 4 4-3 3 4-5 3-8 1-8-1z" fill="#f2f2f2"/><path d="M9 4h3M15 6h4M22 4h3M12 8h3" stroke="#333" stroke-width="2"/><path d="M8 14l4 8-3 6M24 13l-5 10 4 8M15 14l2 18" stroke="#e9e9ea" stroke-width="2" fill="none"/></svg></div>
</footer>

<div class="tip">Screenshot<i></i></div>
<svg class="cursor" width="12" height="18" viewBox="0 0 12 18"><path d="M1 1v12.500l2.900-2.700 2 4.900 2.200-.9-2-4.700H10z" fill="#000" stroke="#fff" stroke-width="1"/></svg>
</body>
</html>
```
FILE: styles.css
```css
* { box-sizing: border-box; }
body {
  margin: 0;
  width: 1440px;
  height: 900px;
  overflow: hidden;
  display: flex;
  flex-direction: column;
  background: linear-gradient(180deg, #2c1c72 0, #271a66 600px, #190e45 780px, #0f0630 850px, #130738 900px);
  font-family: "Noto Sans", "Open Sans", sans-serif;
  font-size: 13px;
  color: #111;
}
p, h1, h4 { margin: 0; }
.defs { position: absolute; }
svg { flex: none; display: block; }

/* macOS menu bar */
.menubar {
  height: 25px;
  flex: none;
  display: flex;
  align-items: center;
  padding: 0 0 1px 19px;
  background: linear-gradient(90deg, #562d92 0, #4a31a0 330px, #3e32a9 640px, #392fa8 1100px, #35299a 1440px);
  border-bottom: 1px solid #261a68;
  color: #f1edfa;
  font: 500 12.5px Inter, sans-serif;
  letter-spacing: .15px;
}
.apple { color: #e6def2; }
.m-app { width: 71px; margin-left: 20px; font-weight: 700; letter-spacing: .25px; }
.m-right { flex: 1; display: flex; justify-content: flex-end; align-items: center; padding-right: 18px; }
.m-right svg { margin-right: 19px; }
.m-right svg:nth-child(1) { margin-right: 21px; }
.m-right svg:nth-child(2) { margin-right: 22px; }
.m-right svg:nth-child(3) { margin-right: 23px; }
.m-right svg:nth-child(4) { margin-right: 25px; }
.m-right svg:nth-child(5) { margin-right: 21px; }
.m-right svg:nth-child(6) { margin-right: 18px; }
.m-right svg:nth-child(9) { margin-right: 18px; }
.m-right svg:nth-child(10) { margin-right: 17px; }
.clock { width: 124px; white-space: nowrap; letter-spacing: .28px; }

/* Browser window */
.window {
  position: relative;
  width: 1432px;
  height: 814px;
  flex: none;
  display: flex;
  flex-direction: column;
  overflow: hidden;
  border-radius: 10px 10px 12px 12px;
  background: #fdf7ff;
}
.tabstrip { height: 40px; flex: none; display: flex; align-items: center; background: #ebdcf8; font: 12px Inter, sans-serif; color: #3f384c; }
.lights { width: 90px; display: flex; gap: 8px; padding-left: 21px; }
.lights i { width: 12px; height: 12px; border-radius: 50%; }
.red { background: #ee5b54; } .yel { background: #f6b832; } .grn { background: #57c13d; }
.pin { width: 46px; height: 16px; display: flex; justify-content: center; align-items: center; border-right: 2px solid #d3bdfc; }
.tab { display: flex; align-items: center; gap: 8px; height: 34px; }
.tab span { width: 141px; white-space: nowrap; overflow: hidden; -webkit-mask-image: linear-gradient(90deg, #000 118px, transparent 139px); mask-image: linear-gradient(90deg, #000 118px, transparent 139px); }
.cx { color: #3f384c; }
.t1, .t2 { height: 16px; }
.t1 { width: 210px; padding-left: 11px; border-right: 2px solid #d3bdfc; }
.t2 { width: 210px; padding-left: 10px; }
.t2 span { letter-spacing: -.05px; }
.active { position: relative; width: 202px; margin-top: 6px; padding: 0 0 6px 9px; border-radius: 9px 9px 0 0; background: #fdf7ff; color: #1c1a20; }
.active::before, .active::after { content: ""; position: absolute; bottom: 0; width: 10px; height: 10px; }
.active::before { left: -10px; background: radial-gradient(circle at 0 0, transparent 9.500px, #fdf7ff 10px); }
.active::after { right: -10px; background: radial-gradient(circle at 100% 0, transparent 9.500px, #fdf7ff 10px); }
.active .cx { color: #1c1a20; }
.plus { margin-left: 14px; }
.tabmenu { width: 28px; height: 28px; margin-left: 62px; border-radius: 9px; background: #f8ebfe; display: flex; align-items: center; justify-content: center; }

.toolbar { height: 47px; flex: none; display: flex; align-items: center; padding: 0 0 1px 16px; gap: 24px; border-bottom: 1px solid #e8dfee; background: #fdf7ff; }
.omni { width: 1174px; height: 34px; margin-left: -5px; margin-right: -5px; padding: 0 16px 0 5px; border-radius: 17px; background: #ece6ee; display: flex; align-items: center; }
.tune { width: 24px; height: 24px; border-radius: 50%; background: #fdf9ff; display: flex; align-items: center; justify-content: center; }
.url { flex: 1; padding-left: 8px; white-space: nowrap; font: 14px Inter, sans-serif; letter-spacing: -.075px; color: #4c4751; }
.url em { font-style: normal; color: #1c1a20; }
.ext { margin-right: -8px; }
.tsep { width: 2px; height: 16px; margin-right: -8px; background: #ecdcfb; }

/* Studio header */
.azbar { height: 40px; flex: none; display: flex; align-items: center; background: #1877d6; color: #fff; }
.brand { width: 912px; padding-left: 16px; font-weight: 500; letter-spacing: .07px; }
.azicons { display: flex; gap: 22.500px; }
.azicons svg { fill: none; stroke: #fff; stroke-width: 1; }
.sub { margin-left: 17px; width: 216px; height: 24px; padding-left: 12px; border-left: 1px solid #9cc6f0; display: flex; flex-direction: column; justify-content: center; line-height: 20px; white-space: nowrap; letter-spacing: .1px; }
.sub b { padding-top: 1px; font-size: 11.5px; letter-spacing: -.04px; }
.azchev { margin: 0 12px 0 -1px; color: #fff; }
.avwrap { height: 24px; padding-left: 8px; border-left: 1px solid #b5d4f4; display: flex; align-items: center; }
.avatar { width: 24px; height: 24px; border-radius: 50%; background: #4866ec; color: #10153a; font-size: 10px; font-weight: 600; line-height: 24px; text-align: center; }

/* Navigation */
.body { flex: 1; min-height: 0; display: flex; }
.side { width: 213px; flex: none; overflow: hidden; background: #fff; }
.burger { height: 32px; padding: 11px 0 0 20px; }
.item { height: 36px; display: flex; align-items: center; gap: 9px; padding-left: 16px; letter-spacing: .06px; color: #171615; }
.item svg { width: 18px; height: 18px; fill: none; stroke: #4a4846; stroke-width: 1.050; }
.cat { gap: 8px; letter-spacing: .16px; }
.gap15 { height: 15px; }
.side h4 { height: 53px; padding: 0 0 3px 16px; display: flex; align-items: center; font-size: 13px; font-weight: 600; }
.on { position: relative; background: #f8f8f8; font-weight: 500; }
.on svg { stroke: #1b6fd0; }
.on::before { content: ""; position: absolute; left: 5px; top: 10px; width: 4px; height: 16px; border-radius: 2px; background: #0a5bdc; }
.sidescroll { width: 15px; flex: none; padding: 3px 0 0 3px; background: #fafafa; border-left: 1px solid #e3e3e3; border-right: 1px solid #d8d8d8; }
.sidescroll i { display: block; width: 8px; height: 516px; border-radius: 4px; background: #c1c1c1; }

/* Content */
.content { width: 1189px; flex: none; display: flex; flex-direction: column; background: #fafafa; }
.crumbs { height: 33px; flex: none; display: flex; align-items: center; gap: 13px; padding: 0 0 2px 20px; letter-spacing: .04px; }
.crumbs a { color: #1a62dd; }
.titlerow { height: 56px; flex: none; display: flex; align-items: center; gap: 20px; padding: 0 0 2px 20px; }
.titlerow h1 { font-size: 22.5px; font-weight: 600; letter-spacing: -.13px; color: #0c0c0c; }
.titlerow svg { margin-top: -1px; }
.pivots { height: 72px; flex: none; display: flex; gap: 25px; padding: 10px 0 0 19px; letter-spacing: .12px; }
.pivots span, .pivots b { height: 39px; line-height: 34px; }
.pivots b { padding: 0 1px; border-bottom: 2px solid #0a5bdc; font-weight: 600; }
.success { width: 1173px; height: 32px; flex: none; margin-left: 8px; padding: 0 10px 0 11px; display: flex; align-items: center; gap: 7px; background: #dff6dd; font-size: 11px; letter-spacing: .12px; color: #323130; }
.success p { flex: 1; white-space: nowrap; }
.success b { font-weight: 600; letter-spacing: 0; }
.success a { color: #0a5ba8; }
.cmdbar { position: relative; z-index: 1; width: 1173px; height: 44px; flex: none; margin: 2px 0 0 8px; padding-left: 26px; display: flex; align-items: center; gap: 7px; background: #fff; border-radius: 4px; box-shadow: 0 1px 3px rgba(0,0,0,.22); font-weight: 500; color: #3c3a38; }
.split { flex: 1; min-height: 0; display: flex; }
.tree { width: 324px; flex: none; padding-left: 24px; border-right: 1px solid #d8d8d8; }
.collapse { height: 39px; padding: 12px 17px 0 0; display: flex; justify-content: flex-end; border-bottom: 1px solid #d4d4d4; }
.node { height: 38px; padding-top: 2px; display: flex; align-items: center; white-space: nowrap; overflow: hidden; letter-spacing: .2px; }
.node .nc { margin: -9px 33px 0 0; color: #444; }
.node svg + svg { margin-top: -1px; }
.node span { margin-left: 14px; }
.l0 { padding-left: 8px; letter-spacing: .18px; } .l1 { padding-left: 22px; } .l2 { padding-left: 36px; }
.sel { margin-left: 1px; padding: 0 0 0 15px; border-left: 2px solid #0a5bdc; background: #e9e9e9; letter-spacing: -.02px; }
.node.sel { height: 37px; margin-top: 1px; }
.sel .file { margin-left: 62px; }
.sel span { margin-left: 13px; padding-top: 2px; }
.preview { flex: 1; min-width: 0; }
.notice { height: 32px; display: flex; align-items: center; padding: 0 10px 0 12px; background: #f3f2f1; font-size: 11px; letter-spacing: .125px; color: #3e3c3a; }
.notice span { flex: 1; padding-left: 8px; white-space: nowrap; }
.notice button { width: 168px; height: 24px; margin-right: 10px; padding: 0; border: 1px solid #8a8886; border-radius: 2px; background: #fff; font: 600 13px/20px "Noto Sans", sans-serif; letter-spacing: -.08px; color: #111; }
.hdrrow { height: 35px; display: flex; align-items: center; gap: 10px; padding: 0 0 2px 10px; }
.hdrrow b { font-weight: 500; letter-spacing: .19px; }
.toggle { width: 40px; height: 20px; padding: 4px; display: flex; justify-content: flex-end; border-radius: 10px; background: #0a5bdc; }
.toggle::after { content: ""; width: 12px; height: 12px; border-radius: 50%; background: #fff; }
table { width: 864px; table-layout: fixed; border-collapse: separate; border-spacing: 0; border-top: 1px solid #dadada; }
th, td { width: 108px; height: 35px; padding: 1px 0 0 8px; border-right: 1px solid #dadada; border-bottom: 1px solid #dadada; background: #fff; text-align: left; white-space: nowrap; font-size: 13px; line-height: 18px; letter-spacing: .12px; }
th:first-child, td:first-child { width: 109px; border-left: 1px solid #d8d8d8; }
th:last-child, td:last-child { width: 107px; border-right: 2px solid #dedede; }
th { background: #f9f9f9; font-weight: 600; color: #0c0c0c; letter-spacing: .3px; }
.mainscroll { width: 15px; flex: none; padding: 36px 0 0 3px; background: #fbfbfb; border-left: 1px solid #e4e4e4; }
.mainscroll i { display: block; width: 8px; height: 620px; border-radius: 4px; background: #c1c1c1; }
.shade { position: absolute; left: 0; right: 0; bottom: 0; height: 44px; background: linear-gradient(180deg, rgba(0,0,0,0), rgba(0,0,0,.03) 40%, rgba(0,0,0,.12)); -webkit-mask-image: linear-gradient(90deg, transparent, #000 80px, #000 1340px, transparent); mask-image: linear-gradient(90deg, transparent, #000 80px, #000 1340px, transparent); }

/* Dock */
.dock {
  width: 1370px;
  height: 53px;
  margin: 3px 0 0 35px;
  flex: none;
  display: flex;
  align-items: flex-start;
  gap: 10.160px;
  padding: 7px 0 0 7px;
  border: 1px solid rgba(255,255,255,.25);
  border-radius: 14px;
  background: linear-gradient(90deg, #64577f 0, #645780 440px, #6b5c97 750px, #9b66c4 960px, #9863c0 1080px, #6f5796 1200px, #5b4e7e 1370px);
}
.app { position: relative; width: 34px; height: 34px; flex: none; }
.app > svg { width: 100%; height: 100%; overflow: visible; }
.run::after { content: ""; position: absolute; left: 15px; top: 39px; width: 4px; height: 4px; border-radius: 50%; background: #16082e; }
.badge { position: absolute; right: -5px; top: -4px; width: 16px; height: 16px; border-radius: 50%; background: #e8432f; color: #fff; font: 9px/16px Inter, sans-serif; text-align: center; text-decoration: none; }
.rocket { height: 40px; margin-top: -3px; }
.cal { border-radius: 8px; overflow: hidden; background: #fafafa; text-align: center; font-family: Inter, sans-serif; }
.cal span { display: block; height: 11px; background: #ec4f44; color: #fff; font-size: 7px; font-weight: 600; line-height: 11px; }
.cal strong { display: block; font-size: 21px; font-weight: 400; line-height: 21px; }
.tv { display: flex; align-items: center; justify-content: center; border-radius: 8px; background: linear-gradient(#29352f, #0d1110); color: #fff; font: 500 13px Inter, sans-serif; }
.app.tv > svg { width: 10px; height: 12px; }
.notion span { position: absolute; left: 9px; top: 8px; width: 22px; text-align: center; font: 700 21px/24px "Liberation Serif", serif; color: #000; }
.letter span { position: absolute; left: 3px; top: 10px; width: 14px; text-align: center; font: 700 10px/14px "Open Sans", sans-serif; color: #fff; }
.zoom { border-radius: 8px; background: #0b5cff; color: #fff; text-align: center; font: 600 9.500px/33px Inter, sans-serif; }
.dsep { width: 1px; height: 39px; margin: -1px 4.500px 0; background: rgba(40,15,70,.55); }
.doc, .trash { height: 40px; margin-top: -3px; }
.doc span { position: absolute; left: 10px; top: 32px; font-size: 5px; line-height: 6px; color: #555; }
.app.shot { width: 40px; height: 32px; margin: 5px -2px 0 -3px; }

.tip { position: absolute; left: 848px; top: 799px; width: 102px; height: 27px; border: 1px solid #d0ced2; border-radius: 5px; background: #e8e6ea; box-shadow: 0 1px 4px rgba(0,0,0,.15); text-align: center; font: 13px/25px Inter, sans-serif; letter-spacing: .25px; color: #29272c; }
.tip i { position: absolute; left: 42px; top: 25px; border: 8px solid transparent; border-top: 6px solid #e8e6ea; border-bottom: 0; }
.cursor { position: absolute; left: 851px; top: 793px; }
```
